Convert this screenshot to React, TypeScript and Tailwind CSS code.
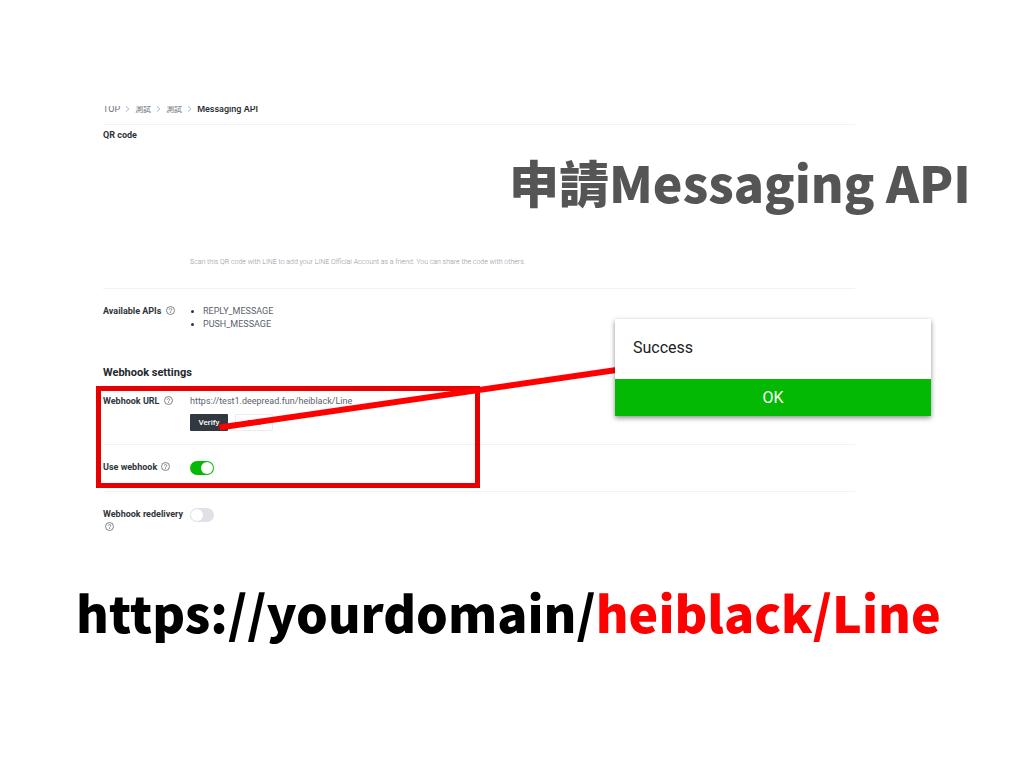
import type { ReactNode } from "react";

function HelpIcon() {
  return (
    <svg viewBox="0 0 18 18" className="inline-block size-[9px] align-[-1px] text-[#5f666d]" fill="none" stroke="currentColor" strokeWidth="1.6" aria-hidden="true">
      <circle cx="9" cy="9" r="8" />
      <path d="M6.6 7.2a2.4 2.4 0 1 1 3.6 2.1c-.8.5-1.2.9-1.2 1.7" />
      <path d="M9 12.3v1.7" />
    </svg>
  );
}

function Chevron() {
  return (
    <svg viewBox="0 0 6 8" className="h-[6px] w-[5px] text-[#a3abb3]" fill="none" stroke="currentColor" strokeWidth="1.2" aria-hidden="true">
      <path d="M1 0.5 4.8 4 1 7.5" />
    </svg>
  );
}

function Row({ label, htmlFor, help = true, className = "", children }: { label: string; htmlFor?: string; help?: boolean; className?: string; children?: ReactNode }) {
  return (
    <div className={`flex ${className}`}>
      <div className="w-[87px] shrink-0 text-[9px] leading-[13px] font-bold text-[#30353a]">
        {htmlFor ? <label htmlFor={htmlFor}>{label}</label> : <span>{label}</span>}
        {help && (
          <>
            {" "}
            <span className="px-[2px]">
              <HelpIcon />
            </span>
          </>
        )}
      </div>
      <div className="min-w-0 flex-1">{children}</div>
    </div>
  );
}

function Toggle({ id, on = false }: { id: string; on?: boolean }) {
  return (
    <input
      id={id}
      type="checkbox"
      role="switch"
      defaultChecked={on}
      className="flex h-[14px] w-6 appearance-none items-center rounded-full bg-[#dee1e6] px-px before:size-3 before:rounded-full before:bg-white checked:justify-end checked:bg-[#06b906]"
    />
  );
}

export default function App() {
  return (
    <main className="relative min-h-screen bg-white pt-[106px] font-['Roboto','Noto_Sans_CJK_TC',sans-serif]">
      <div className="mr-[169px] ml-[103px]">
        <nav aria-label="Breadcrumb" className="h-[19px] overflow-hidden border-b border-[#f1f2f3] text-[9px] leading-[5px] text-[#6b7178]">
          <ol className="flex items-center gap-[5px]">
            <li><a href="#top">TOP</a></li>
            <Chevron />
            <li><a href="#provider" className="text-[8px]">測試</a></li>
            <Chevron />
            <li><a href="#channel" className="text-[8px]">測試</a></li>
            <Chevron />
            <li className="font-medium text-[#24282c]">Messaging API</li>
          </ol>
        </nav>

        <Row label="QR code" help={false} className="h-[164px] border-b border-[#f1f2f3] pt-1">
          <p className="pt-[127px] text-[7px] leading-[12px] font-light text-[#8d969f]">
            Scan this QR code with LINE to add your LINE Official Account as a friend. You can share the code with others.
          </p>
        </Row>

        <Row label="Available APIs" className="pt-4">
          <ul className="list-disc pl-[13px] text-[9px] leading-[13px] text-[#5a626b] marker:text-[#30353a]">
            <li>REPLY_MESSAGE</li>
            <li>PUSH_MESSAGE</li>
          </ul>
        </Row>

        <h2 className="pt-[34px] text-[11px] leading-4 font-bold text-[#24282c]">Webhook settings</h2>

        <div className="relative">
          <Row label="Webhook URL" className="h-[64px] border-b border-[#f1f2f3] pt-[14px]">
            <p className="text-[9px] leading-[13px] text-[#5a626b]">https://test1.deepread.fun/heiblack/Line</p>
            <div className="flex gap-[7px] pt-[6px]">
              <button type="button" className="h-[17px] w-[38px] rounded-[1px] bg-[#323840] text-[8px] font-medium text-white">Verify</button>
              <button type="button" className="h-[17px] w-[38px] rounded-[1px] border border-[#ececee] bg-white text-[8px] text-[#3c4248]">Edit</button>
            </div>
          </Row>
          <Row label="Use webhook" htmlFor="use-webhook" className="h-[47px] border-b border-[#f1f2f3] pt-4">
            <Toggle id="use-webhook" on />
          </Row>
          <div className="pointer-events-none absolute top-[5px] -left-[7px] h-[102px] w-[384px] border-5 border-[#e80000]" />
        </div>

        <Row label="Webhook redelivery" htmlFor="redelivery" className="pt-4">
          <Toggle id="redelivery" />
        </Row>
      </div>

      <p className="pt-10 pl-[76px] font-['Noto_Sans_CJK_TC',sans-serif] text-[50px] leading-[74px] font-black whitespace-nowrap text-black">
        https://yourdomain/<span className="text-[#ff0000]">heiblack/Line</span>
      </p>

      <h1 className="absolute top-36 left-[509px] font-['Noto_Sans_CJK_TC',sans-serif] text-[50px] leading-[74px] font-black whitespace-nowrap text-[#555555]">
        申請Messaging API
      </h1>

      <svg className="pointer-events-none absolute top-[360px] left-[210px] h-20 w-[410px]" viewBox="0 0 410 80" aria-hidden="true">
        <path d="M9.5 67.5 410 9.5" stroke="#ff0000" strokeWidth="6" />
      </svg>

      <section role="dialog" aria-label="Success" className="absolute top-[319px] left-[615px] w-[316px] bg-white shadow-[0_2px_5px_rgba(0,0,0,0.45)]">
        <p className="px-[18px] pt-[17px] pb-[19px] text-[16px] leading-6 text-[#222222]">Success</p>
        <button type="button" className="block h-[37px] w-full bg-[#03b903] pt-px text-[16px] text-white">OK</button>
      </section>
    </main>
  );
}
